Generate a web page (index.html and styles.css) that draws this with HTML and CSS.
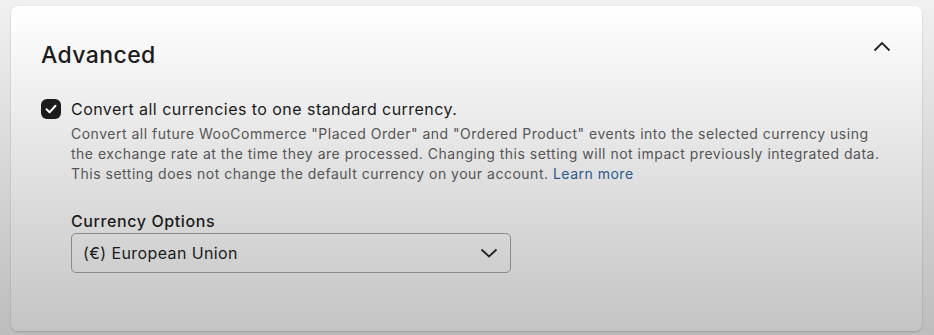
FILE: index.html
```html
<!DOCTYPE html>
<html lang="en">
<head>
  <meta charset="UTF-8">
  <meta name="viewport" content="width=device-width, initial-scale=1.0">
  <title>Advanced settings</title>
  <link rel="stylesheet" href="styles.css">
</head>
<body>
  <section class="panel">
    <div class="panel-header">
      <h2>Advanced</h2>
      <button class="collapse" aria-label="Collapse">
        <svg width="18" height="11" viewBox="0 0 18 11"><path d="M1.5 9.5 L9 2 L16.5 9.5" fill="none" stroke="#222" stroke-width="1.8"/></svg>
      </button>
    </div>

    <div class="option">
      <span class="check">
        <svg width="12" height="10" viewBox="0 0 12 10"><path d="M1.5 5.2 L4.6 8.2 L10.5 1.8" fill="none" stroke="#fff" stroke-width="2" stroke-linecap="round" stroke-linejoin="round"/></svg>
      </span>
      <div class="option-body">
        <div class="option-label">Convert all currencies to one standard currency.</div>
        <p class="option-help">
          Convert all future WooCommerce "Placed Order" and "Ordered Product" events into the selected currency using<br>
          the exchange rate at the time they are processed. Changing this setting will not impact previously integrated data.<br>
          This setting does not change the default currency on your account. <a href="#">Learn more</a>
        </p>

        <label class="field-label">Currency Options</label>
        <div class="select">
          <span>(€) European Union</span>
          <svg width="18" height="10" viewBox="0 0 18 10"><path d="M1.5 1.5 L9 8.5 L16.5 1.5" fill="none" stroke="#222" stroke-width="1.8"/></svg>
        </div>
      </div>
    </div>
  </section>
</body>
</html>
```

FILE: styles.css
```css
* {
  margin: 0;
  padding: 0;
  box-sizing: border-box;
}

html, body {
  height: 100%;
}

body {
  font-family: Inter, "Noto Sans", Arial, sans-serif;
  background: linear-gradient(to bottom, #f1f1f1, #bdbdbd);
  padding: 6px 12px 0 11px;
  color: #1b1b1b;
}

.panel {
  height: 325px;
  border-radius: 7px;
  background: linear-gradient(to bottom, #ffffff, #c4c4c4);
  box-shadow: 0 1px 2px rgba(0, 0, 0, 0.18), 0 0 1px rgba(0, 0, 0, 0.12);
  padding: 30px 30px 0 30px;
}

.panel-header {
  display: flex;
  justify-content: space-between;
  align-items: flex-start;
}

.panel-header h2 {
  font-size: 23px;
  font-weight: 500;
  letter-spacing: 0.4px;
  line-height: 34px;
  margin-top: 2px;
}

.collapse {
  background: none;
  border: none;
  margin: 4px 1px 0 0;
  cursor: pointer;
}

.option {
  display: flex;
  gap: 10px;
  margin-top: 25px;
}

.check {
  width: 20px;
  height: 20px;
  border-radius: 6px;
  background-color: #1c1c1c;
  display: flex;
  align-items: center;
  justify-content: center;
  flex-shrink: 0;
  margin-top: 2px;
}

.option-label {
  font-size: 16px;
  line-height: 24px;
  letter-spacing: 0.45px;
}

.option-help {
  font-size: 14px;
  line-height: 20px;
  letter-spacing: 0.5px;
  color: #555;
  margin-top: 3px;
  white-space: nowrap;
}

.option-help a {
  color: #2a5a8c;
  text-decoration: none;
}

.field-label {
  display: block;
  font-size: 16px;
  font-weight: 500;
  letter-spacing: 0.6px;
  line-height: 22px;
  margin-top: 26px;
  margin-bottom: 1px;
}

.select {
  width: 440px;
  height: 40px;
  border: 1px solid #8a8a8a;
  border-radius: 5px;
  display: flex;
  align-items: center;
  justify-content: space-between;
  padding: 0 12px 0 11px;
  font-size: 16px;
  letter-spacing: 0.4px;
}
```
